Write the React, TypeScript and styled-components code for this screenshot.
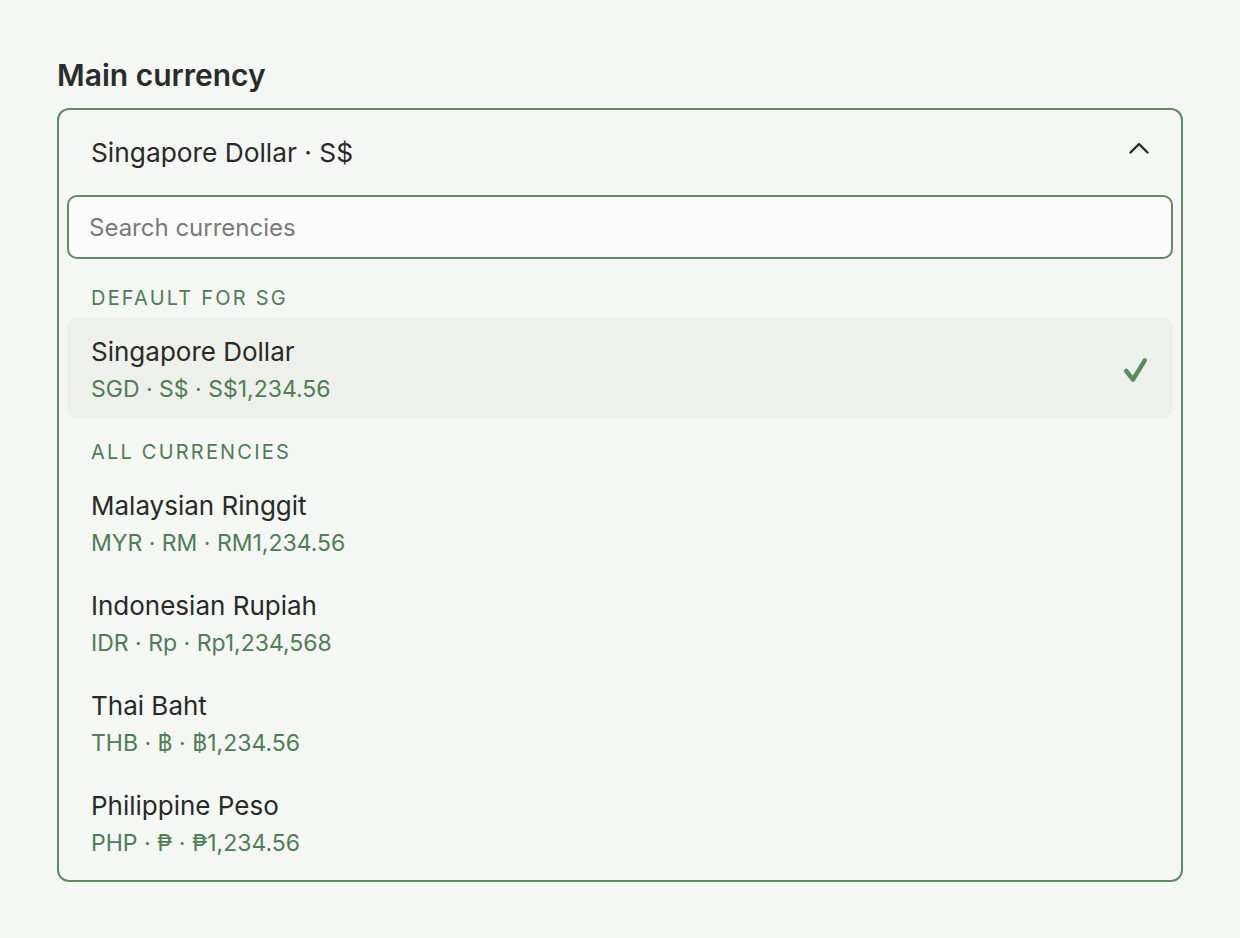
import React, { useState } from 'react';
import styled, { createGlobalStyle } from 'styled-components';

const GlobalStyle = createGlobalStyle`
    html, body {
        margin: 0;
        padding: 0;
        background: #f5f7f4;
    }
    body {
        font-family: Inter, "Noto Sans", "Liberation Sans", sans-serif;
        color: #282a28;
        -webkit-font-smoothing: antialiased;
    }
`;

type Currency = {
    code: string;
    name: string;
    symbol: string;
    sample: string;
};

const defaultCurrency: Currency = { code: 'SGD', name: 'Singapore Dollar', symbol: 'S$', sample: 'S$1,234.56' };

const allCurrencies: Currency[] = [
    { code: 'MYR', name: 'Malaysian Ringgit', symbol: 'RM', sample: 'RM1,234.56' },
    { code: 'IDR', name: 'Indonesian Rupiah', symbol: 'Rp', sample: 'Rp1,234,568' },
    { code: 'THB', name: 'Thai Baht', symbol: '฿', sample: '฿1,234.56' },
    { code: 'PHP', name: 'Philippine Peso', symbol: '₱', sample: '₱1,234.56' },
];

const Page = styled.div`
    padding: 55px 57px 56px;
    min-height: 100vh;
    box-sizing: border-box;
`;

const Label = styled.h2`
    margin: 0 0 13px;
    font-size: 30px;
    font-weight: 600;
    line-height: 40px;
    color: #2a2c2a;
`;

const Dropdown = styled.div`
    border: 2px solid #618a64;
    border-radius: 12px;
    padding: 0 8px 8px;
`;

const Trigger = styled.button`
    display: flex;
    align-items: center;
    justify-content: space-between;
    width: 100%;
    padding: 27px 24px 26px 24px;
    background: transparent;
    border: none;
    font-family: inherit;
    font-size: 26.3px;
    line-height: 32px;
    color: #282a28;
    cursor: pointer;
    text-align: left;
`;

const Chevron = styled.svg`
    margin-bottom: 10px;
    flex-shrink: 0;
`;

const SearchInput = styled.input`
    display: block;
    width: 100%;
    box-sizing: border-box;
    height: 64px;
    padding: 0 20px;
    border: 2px solid #618a64;
    border-radius: 10px;
    background: #fbfbfb;
    font-family: inherit;
    font-size: 24px;
    color: #282a28;
    outline: none;

    &::placeholder {
        color: #7a7a7a;
    }
`;

const SectionTitle = styled.div<{ $first?: boolean }>`
    padding: ${(p) => (p.$first ? '28px' : '23px')} 24px 9px;
    font-size: 20px;
    line-height: 22px;
    letter-spacing: 2.2px;
    text-transform: uppercase;
    color: #4f7d55;
`;

const Option = styled.div<{ $selected?: boolean }>`
    display: flex;
    align-items: center;
    justify-content: space-between;
    height: 100px;
    padding: 3px 24px 0;
    box-sizing: border-box;
    border-radius: 10px;
    background: ${(p) => (p.$selected ? '#eef0ec' : 'transparent')};
    cursor: pointer;
`;

const OptionText = styled.div`
    display: flex;
    flex-direction: column;
    gap: 7px;
`;

const OptionName = styled.span`
    font-size: 26px;
    line-height: 32px;
    color: #282a28;
`;

const OptionMeta = styled.span`
    font-size: 23px;
    line-height: 28px;
    color: #4f7d55;
`;

const ChevronUp = () => (
    <Chevron width="20" height="12" viewBox="0 0 20 12" fill="none">
        <path d="M1.5 10.5 L10 2 L18.5 10.5" stroke="#282a28" strokeWidth="2.4" strokeLinecap="round" strokeLinejoin="round" />
    </Chevron>
);

const Check = () => (
    <svg width="26" height="26" viewBox="0 0 26 26" fill="none">
        <path d="M3.2 14 L10 22.6 L21.8 3.4" stroke="#5a8a5e" strokeWidth="4.5" strokeLinecap="round" strokeLinejoin="round" />
    </svg>
);

function CurrencyOption({ currency, selected }: { currency: Currency; selected?: boolean }) {
    return (
        <Option $selected={selected}>
            <OptionText>
                <OptionName>{currency.name}</OptionName>
                <OptionMeta>
                    {currency.code} · {currency.symbol} · {currency.sample}
                </OptionMeta>
            </OptionText>
            {selected && <Check />}
        </Option>
    );
}

export default function App() {
    const [query, setQuery] = useState('');

    return (
        <Page>
            <GlobalStyle />
            <Label>Main currency</Label>
            <Dropdown>
                <Trigger>
                    <span>
                        {defaultCurrency.name} · {defaultCurrency.symbol}
                    </span>
                    <ChevronUp />
                </Trigger>
                <SearchInput
                    placeholder="Search currencies"
                    value={query}
                    onChange={(e) => setQuery(e.target.value)}
                />
                <SectionTitle $first>Default for SG</SectionTitle>
                <CurrencyOption currency={defaultCurrency} selected />
                <SectionTitle>All currencies</SectionTitle>
                {allCurrencies.map((c) => (
                    <CurrencyOption key={c.code} currency={c} />
                ))}
            </Dropdown>
        </Page>
    );
}
